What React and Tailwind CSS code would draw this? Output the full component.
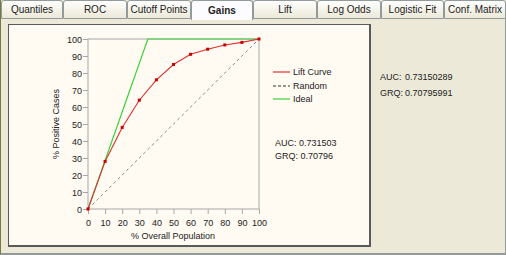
import React from "react";

const TABS = [
  ["Quantiles", "w-[62px]"],
  ["ROC", "w-[64px]"],
  ["Cutoff Points", "w-[64px]"],
  ["Gains", "w-[62px]"],
  ["Lift", "w-[64px]"],
  ["Log Odds", "w-[64px]"],
  ["Logistic Fit", "w-[63px]"],
  ["Conf. Matrix", "w-[62px]"],
];

const LIFT = [
  [0, 0], [10, 28], [20, 48], [30, 64], [40, 76], [50, 85],
  [60, 91], [70, 94], [80, 96.5], [90, 98], [100, 100],
];

const X = (v) => 88 + 1.71 * v;
const Y = (v) => 210 - 1.7 * v;
const TICKS = [0, 10, 20, 30, 40, 50, 60, 70, 80, 90, 100];

function GainsChart() {
  return (
    <svg width="360" height="220" className="block fill-[#222] text-[9px] font-['Liberation_Sans',Arial,sans-serif]">
      <g transform="translate(-9,-26)">
        <rect x="88" y="40" width="171" height="170" fill="none" stroke="#a8a8a8" />
        {TICKS.map((t) => (
          <g key={"y" + t}>
            <line x1="83" x2="88" y1={Y(t) + 0.5} y2={Y(t) + 0.5} stroke="#a8a8a8" />
            <text x="82" y={Y(t) + 3.5} textAnchor="end">{t}</text>
          </g>
        ))}
        {TICKS.map((t) => (
          <g key={"x" + t}>
            <line x1={X(t) + 0.5} x2={X(t) + 0.5} y1="210" y2="215" stroke="#a8a8a8" />
            <text x={X(t) + 0.5} y="227" textAnchor="middle">{t}</text>
          </g>
        ))}
        <text x="173" y="240" textAnchor="middle">% Overall Population</text>
        <text x="59" y="125" textAnchor="middle" transform="rotate(-90 59 125)">% Positive Cases</text>

        <line x1="88" y1="210" x2="259" y2="40" stroke="#8a8a8a" strokeDasharray="3 3" />
        <polyline points={`88,210 ${X(35)},40 259,40`} fill="none" stroke="#3ad23a" strokeWidth="1.2" />
        <polyline points={LIFT.map(([a, b]) => `${X(a)},${Y(b)}`).join(" ")} fill="none" stroke="#e03030" strokeWidth="1.1" />
        {LIFT.map(([a, b]) => (
          <rect key={a} x={X(a) - 1.5} y={Y(b) - 1.5} width="3" height="3" fill="#c80000" />
        ))}

        <line x1="273" x2="290" y1="73" y2="73" stroke="#e03030" strokeWidth="1.2" />
        <text x="293" y="76">Lift Curve</text>
        <line x1="273" x2="290" y1="87" y2="87" stroke="#333" strokeDasharray="3 2" />
        <text x="293" y="90">Random</text>
        <line x1="273" x2="290" y1="100" y2="100" stroke="#3ad23a" strokeWidth="1.2" />
        <text x="293" y="103">Ideal</text>

        <text x="275" y="146.5">AUC: 0.731503</text>
        <text x="275" y="160">GRQ: 0.70796</text>
      </g>
    </svg>
  );
}

export default function App() {
  return (
    <div className="w-[506px] h-[255px] bg-[#ece9d8] text-[10px] text-[#222] flex flex-col overflow-hidden font-['Liberation_Sans',Arial,sans-serif]">
      <div className="flex h-[19px] shrink-0 border-l border-[#7a7a3a]">
        {TABS.map(([label, w]) => {
          const active = label === "Gains";
          return (
            <div
              key={label}
              className={
                active
                  ? `${w} h-[20px] flex items-center justify-center whitespace-nowrap font-bold bg-[#fcfcfe] border-t border-x border-[#919b9c] rounded-t-[3px] relative z-10`
                  : `${w} h-[19px] flex items-center justify-center whitespace-nowrap bg-gradient-to-b from-[#fefefd] to-[#ece9d8] border-t border-x border-b border-[#919b9c] rounded-t-[3px]`
              }
            >
              {label}
            </div>
          );
        })}
      </div>
      <div className="flex-1 flex border-l border-[#7a7a3a] border-r border-r-[#919b9c] border-b-2 border-b-[#919b9c] bg-[#ece9d8]">
        <div className="ml-[7px] mt-[5px] w-[363px] h-[223px] shrink-0 bg-[#fffaf2] border-t border-l border-r-2 border-b-2 border-[#5a5a5a] overflow-hidden">
          <GainsChart />
        </div>
        <div className="ml-[9px] mt-[52px] flex flex-col gap-[4px] text-[9px] leading-[12px] whitespace-nowrap">
          <div className="flex"><span className="w-[25px] shrink-0">AUC:</span><span>0.73150289</span></div>
          <div className="flex"><span className="w-[25px] shrink-0">GRQ:</span><span>0.70795991</span></div>
        </div>
      </div>
    </div>
  );
}
